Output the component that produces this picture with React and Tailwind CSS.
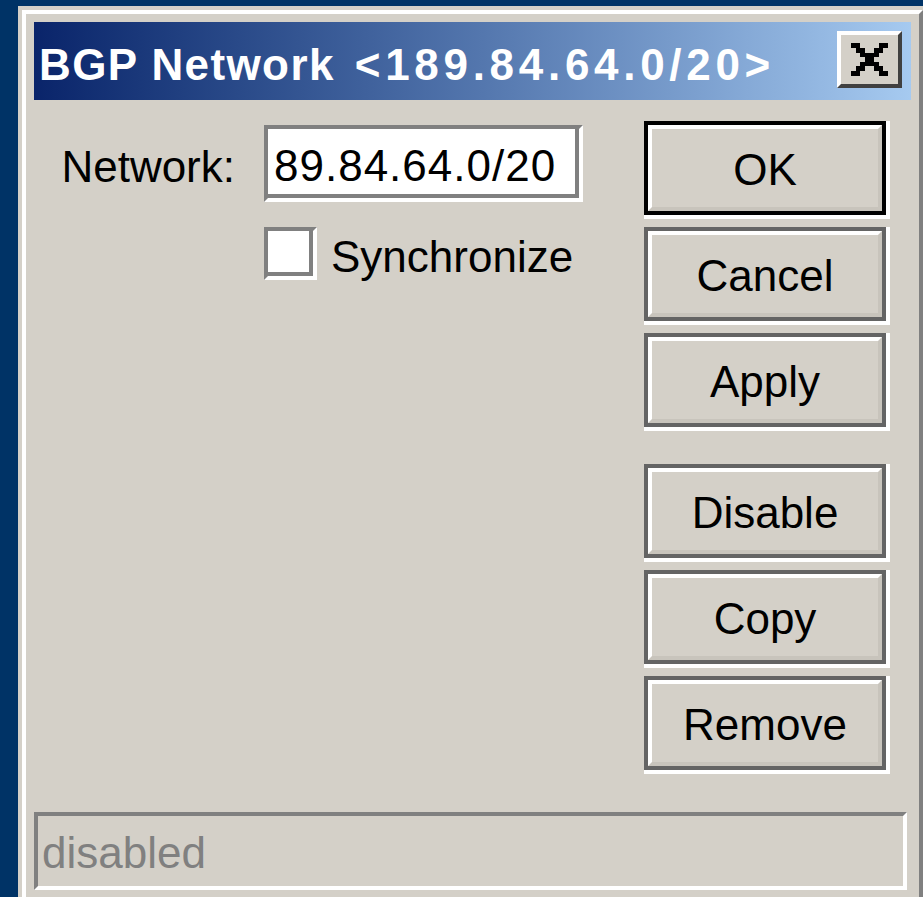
import React from 'react';

// classic 8x7 close glyph, two pixels wide per row
const closeGlyph = [
    [0, 0, 2], [6, 0, 2],
    [1, 1, 2], [5, 1, 2],
    [2, 2, 4],
    [3, 3, 2],
    [2, 4, 4],
    [1, 5, 2], [5, 5, 2],
    [0, 6, 2], [6, 6, 2],
];

function CloseButton() {
    return (
        <div className="mt-[9px] mr-[9px] w-[65px] h-[57px] border-4 border-t-white border-l-white border-r-[#404040] border-b-[#404040] bg-[#d4d0c8] flex items-center justify-center">
            <svg width="37" height="33" viewBox="0 0 8 7" shapeRendering="crispEdges">
                {closeGlyph.map(([x, y, w], i) => (
                    <rect key={i} x={x} y={y} width={w} height="1" fill="#000" />
                ))}
            </svg>
        </div>
    );
}

function Button({ label, isDefault }) {
    return (
        <div className="w-[246px] h-[98px] border-r-4 border-b-4 border-white">
            <div className={`h-full border-4 ${isDefault ? 'border-black' : 'border-[#646464]'}`}>
                <div className="h-full border-4 border-t-white border-l-white border-r-[#c8c4bc] border-b-[#c8c4bc] bg-[#d4d0c8] flex items-center justify-center pt-[3px]">
                    {label}
                </div>
            </div>
        </div>
    );
}

// sunken white box used by the edit field and the checkbox
function Sunken({ className, children }) {
    return (
        <div className={`border-4 border-t-[#808080] border-l-[#808080] border-r-white border-b-white ${className}`}>
            <div className="h-full border-r-4 border-b-4 border-[#808080] bg-white">
                {children}
            </div>
        </div>
    );
}

export default function App() {
    return (
        <div className="w-[923px] h-[897px] overflow-hidden bg-[#003366] pl-[18px] pt-[6px] font-['Liberation_Sans',Arial,sans-serif] text-[44px] leading-[45px] text-black">
            <div className="w-[909px] h-[900px] flex flex-col border-4 border-t-[#d4d0c8] border-l-[#d4d0c8] border-r-[#404040] border-b-[#404040]">
                <div className="flex-1 flex flex-col border-4 border-t-white border-l-white border-r-[#808080] border-b-[#808080] bg-[#d4d0c8] p-[8px]">
                    {/* Title bar */}
                    <div className="h-[78px] shrink-0 flex items-start justify-between bg-gradient-to-r from-[#0a246a] to-[#a6caf0]">
                        <div className="pt-[20px] pl-[5px] text-white font-bold whitespace-nowrap flex">
                            <span className="tracking-[1.4px]">BGP Network</span>
                            <span className="ml-[20px] tracking-[4.7px]">&lt;189.84.64.0/20&gt;</span>
                        </div>
                        <CloseButton />
                    </div>

                    {/* Body */}
                    <div className="h-[712px] shrink-0 flex pt-[21px]">
                        <div className="w-[610px] flex flex-col">
                            <div className="flex mt-[4px]">
                                <div className="w-[230px] text-right pr-[29px] pt-[19px]">Network:</div>
                                <Sunken className="w-[319px] h-[77px]">
                                    <div className="pt-[14px] pl-[6px] tracking-[1px] whitespace-nowrap">
                                        89.84.64.0/20
                                    </div>
                                </Sunken>
                            </div>
                            <div className="flex mt-[25px] pl-[230px]">
                                <Sunken className="w-[53px] h-[53px]" />
                                <div className="ml-[14px] pt-[7px]">Synchronize</div>
                            </div>
                        </div>

                        <div className="w-[246px] flex flex-col gap-[8px]">
                            <Button label="OK" isDefault />
                            <Button label="Cancel" />
                            <Button label="Apply" />
                            <div className="mt-[25px]">
                                <Button label="Disable" />
                            </div>
                            <Button label="Copy" />
                            <Button label="Remove" />
                        </div>
                    </div>

                    {/* Status bar */}
                    <div className="h-[78px] shrink-0 mr-[4px] border-4 border-t-[#808080] border-l-[#808080] border-r-white border-b-white pt-[14px] pl-[4px] text-[#808080]">
                        disabled
                    </div>
                </div>
            </div>
        </div>
    );
}
